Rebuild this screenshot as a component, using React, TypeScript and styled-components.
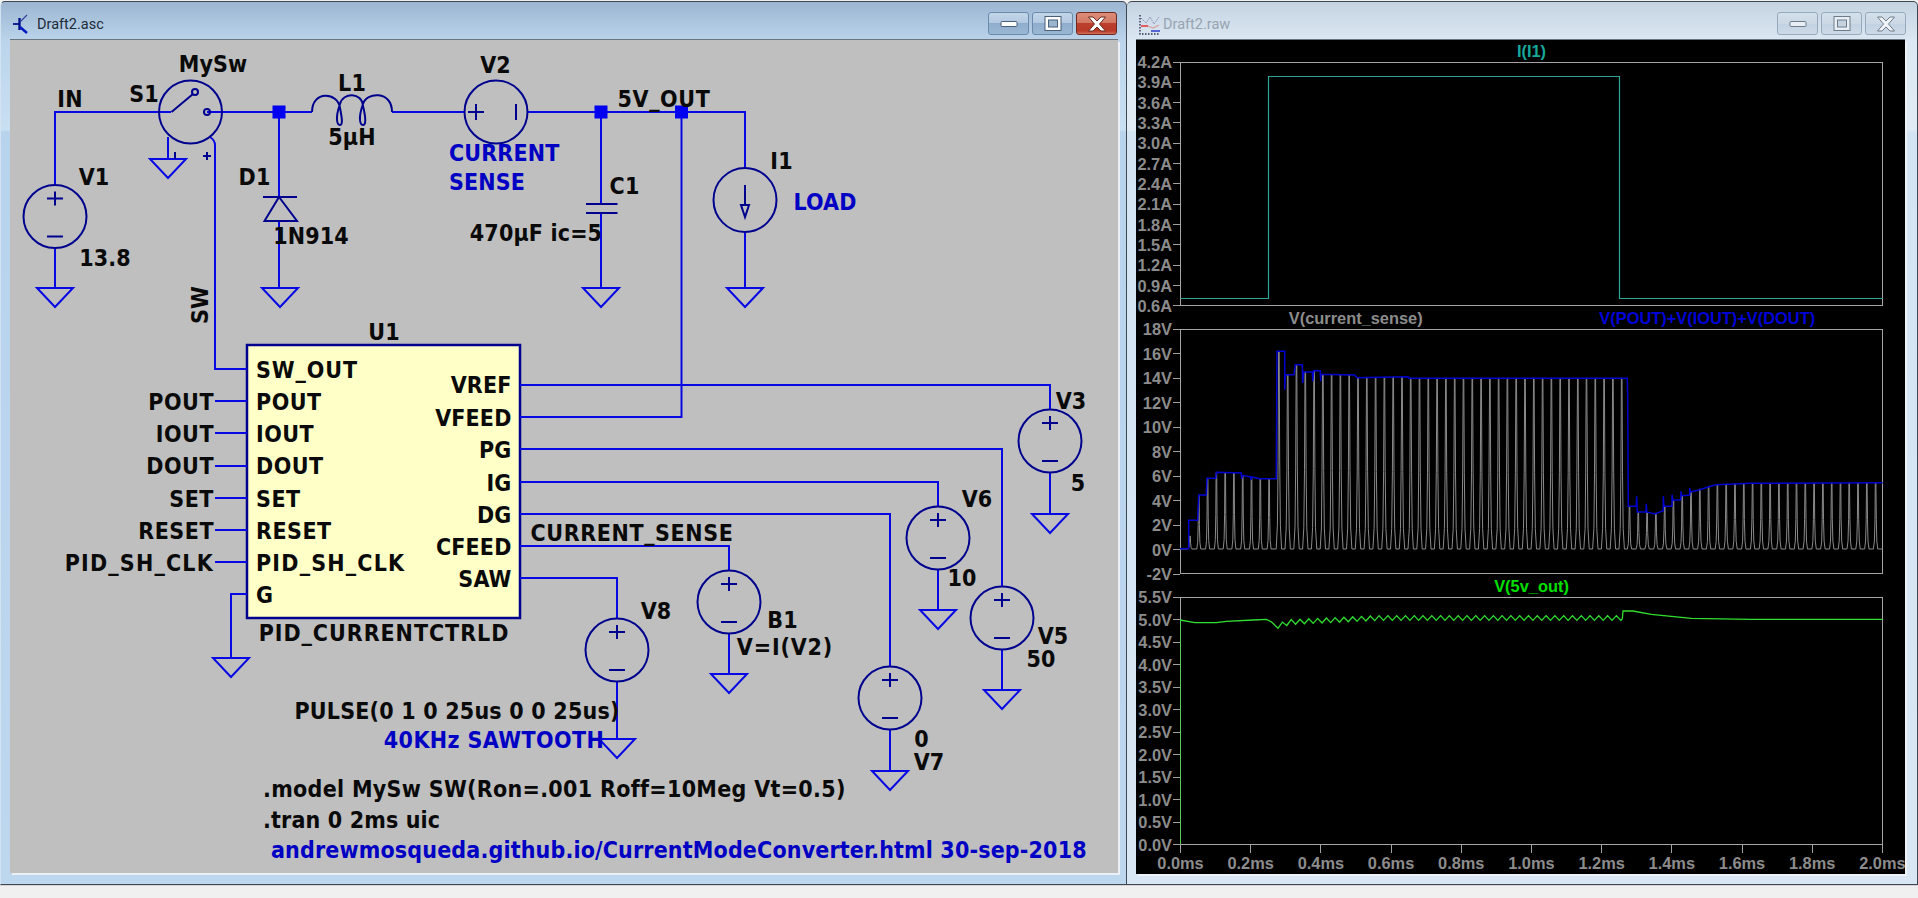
import React from "react";
import styled, { createGlobalStyle } from "styled-components";

const Global = createGlobalStyle`
  html, body { margin: 0; padding: 0; background: #eff0ef; overflow: hidden; }
  #root { width: 1918px; height: 898px; }
`;

const Screen = styled.div`
  width: 1918px;
  height: 898px;
  display: flex;
  flex-direction: column;
  background: #eff0ef;
  padding-top: 1px;
  box-sizing: border-box;
`;
const Desktop = styled.div`
  display: flex;
  height: 884px;
`;
const Strip = styled.div`
  flex: 1;
  background: #eff0ef;
  border-top: 1px solid #d8d2d8;
`;
const Window = styled.section<{ $active?: boolean; $w: number }>`
  width: ${(p) => p.$w}px;
  box-sizing: border-box;
  display: flex;
  flex-direction: column;
  border: 1px solid #3d4852;
  border-left: ${(p) => (p.$active ? "1px solid #d4e3f1" : "0")};
  border-radius: 5px 5px 0 0;
  background: ${(p) =>
    p.$active
      ? "linear-gradient(180deg, #9cb6d2 0, #bcd5ec 40px, #c9dff2 128px, #b8d3ec 130px, #bcd7ee 100%)"
      : "linear-gradient(180deg, #c5d3e1 0, #dce8f3 40px, #e0ebf5 128px, #d4e4f3 130px, #d9e7f4 100%)"};
`;
const TitleBar = styled.header<{ $right: number }>`
  height: 38px;
  box-sizing: border-box;
  display: flex;
  align-items: flex-start;
  padding: 10px ${(p) => p.$right}px 0 12px;
`;
const TitleIcon = styled.svg`
  width: 22px;
  height: 22px;
  margin: 2px 2px 0 0;
  flex: none;
`;
const TitleText = styled.span<{ $active?: boolean }>`
  font: 400 14.5px/26px Roboto, "Noto Sans", sans-serif;
  color: ${(p) => (p.$active ? "#1d2b38" : "#97a4b1")};
`;
const Buttons = styled.div`
  margin-left: auto;
  display: flex;
  gap: 3px;
`;
const CaptionButton = styled.div<{ $kind: "plain" | "close"; $active?: boolean }>`
  width: 41px;
  height: 23px;
  box-sizing: border-box;
  border-radius: 3px;
  display: flex;
  align-items: center;
  justify-content: center;
  border: 1px solid
    ${(p) => (p.$kind === "close" && p.$active ? "#6e2a20" : p.$active ? "#6b8bad" : "#97aabd")};
  background: ${(p) =>
    p.$kind === "close" && p.$active
      ? "linear-gradient(180deg, #dd8c78 0, #d27a66 45%, #bb3f2c 50%, #b83a28 85%, #d0705a 100%)"
      : p.$active
      ? "linear-gradient(180deg, #c2d5e8 0, #b4cae1 45%, #8fadcd 50%, #9ab7d4 100%)"
      : "linear-gradient(180deg, #d4e0eb 0, #cbd8e5 50%, #c2d2e2 52%, #cddaE7 100%)"};
`;
const Body = styled.div<{ $left: number; $right: number; $bottom: number }>`
  flex: 1;
  display: flex;
  padding: 0 ${(p) => p.$right}px ${(p) => p.$bottom}px ${(p) => p.$left}px;
  min-height: 0;
`;
const SchematicClient = styled.div`
  position: relative;
  width: 1108px;
  height: 833px;
  background: #bfbfbf;
  box-shadow: 0 -1px 0 #6b7580, 2px 2px 0 #eaf0f6;
  overflow: hidden;
`;
const WaveClient = styled.div`
  width: 769px;
  height: 834px;
  background: #000;
  box-shadow: 0 -1px 0 #6b7580, 2px 2px 0 #eef3f8;
  display: flex;
  flex-direction: column;
  overflow: hidden;
`;
const CircuitSvg = styled.svg`
  position: absolute;
  left: 0;
  top: 0;
`;
const Wire = styled.path`
  fill: none;
  stroke: #0808e4;
  stroke-width: 2;
`;
const Sym = styled.path`
  fill: none;
  stroke: #00008f;
  stroke-width: 2;
`;
const Junction = styled.rect`
  fill: #0000f0;
`;
const BlockFill = styled.rect`
  fill: #ffffc8;
  stroke: #00008f;
  stroke-width: 2.5;
`;
const Label = styled.span<{
  $x: number;
  $y: number;
  $a?: "l" | "c" | "r";
  $blue?: boolean;
  $rot?: boolean;
  $ls?: number;
}>`
  position: absolute;
  left: ${(p) => p.$x - 10}px;
  top: ${(p) => p.$y - 40}px;
  transform: translate(${(p) => (p.$a === "c" ? "-50%" : p.$a === "r" ? "-100%" : "0")}, -50%)
    ${(p) => (p.$rot ? "rotate(-90deg)" : "")};
  font: 700 23px/26px "DejaVu Sans Condensed", "DejaVu Sans", sans-serif;
  letter-spacing: ${(p) => p.$ls ?? 0.15}px;
  white-space: nowrap;
  color: ${(p) => (p.$blue ? "#0000c4" : "#0a0a0a")};
`;

const Pane = styled.div<{ $title: number; $plot: number }>`
  display: grid;
  grid-template-columns: 44px 703px;
  grid-template-rows: ${(p) => p.$title}px ${(p) => p.$plot}px;
`;
const PaneTitles = styled.div`
  grid-column: 2;
  display: grid;
  grid-auto-flow: column;
  grid-auto-columns: 1fr;
  align-items: center;
  text-align: center;
`;
const PaneTitle = styled.span<{ $c: string }>`
  font: 700 16.4px/20px "Liberation Sans", Arial, sans-serif;
  color: ${(p) => p.$c};
`;
const YAxis = styled.div`
  grid-column: 1;
  display: flex;
  flex-direction: column;
  justify-content: space-between;
`;
const YTick = styled.div`
  height: 0;
  display: flex;
  align-items: center;
  justify-content: flex-end;
  font: 700 16.4px/20px "Liberation Sans", Arial, sans-serif;
  color: #8c8c8c;
  white-space: nowrap;
  &::after {
    content: "";
    width: 7px;
    height: 1px;
    margin-left: 1px;
    background: #a0a0a0;
  }
`;
const PlotArea = styled.div`
  box-shadow: inset 0 0 0 1px #a4a4a4;
`;
const Trace = styled.svg`
  display: block;
`;
const TraceLine = styled.path<{ $c: string; $w?: number }>`
  fill: none;
  stroke: ${(p) => p.$c};
  stroke-width: ${(p) => p.$w ?? 1};
`;
const XAxis = styled.div`
  margin-left: 44px;
  width: 703px;
  height: 29px;
  display: flex;
  justify-content: space-between;
`;
const XTick = styled.div`
  width: 1px;
  display: flex;
  flex-direction: column;
  align-items: center;
  font: 700 16.4px/20px "Liberation Sans", Arial, sans-serif;
  color: #8c8c8c;
  white-space: nowrap;
  &::before {
    content: "";
    flex: none;
    width: 1px;
    height: 8px;
    background: #a0a0a0;
  }
`;

/* ---------- schematic symbols ---------- */
const Ground = ({ x, y }: { x: number; y: number }) => (
  <Wire d={`M${x - 18} ${y}H${x + 18}L${x} ${y + 19}Z`} />
);
const Source = ({ x, y }: { x: number; y: number }) => (
  <>
    <Sym as="ellipse" cx={x} cy={y} rx={31.5} ry={31.5} />
    <Sym d={`M${x - 8} ${y - 18}H${x + 8}M${x} ${y - 25}V${y - 11}M${x - 8} ${y + 20}H${x + 8}`} />
  </>
);

const Schematic = () => (
  <CircuitSvg width={1108} height={833} viewBox="10 40 1108 833">
    <BlockFill x={247} y={345} width={273} height={273} />
    {/* wires */}
    <Wire d="M55 185V112H171M207 112H312M392 112H464M528 112H745V168M745 232V288M55 248V288" />
    <Wire d="M279 112V197M279 221V288M601 112V204M601 213V288" />
    <Wire d="M681.5 112V417H520M520 385H1050V409M1050 473V514" />
    <Wire d="M520 449H1002V587M1002 649V690M520 482H938V507M938 570V610" />
    <Wire d="M520 514H890V667M890 729V771M520 546H729V571M729 633V674M520 578H617V618M617 681V739" />
    <Wire d="M210 137C213 139 215 141 215 145V369H247" />
    <Wire d="M215 401H247M215 433H247M215 466H247M215 498H247M215 530H247M215 562H247M247 594H231V658" />
    <Wire d="M168 137V159" />
    {[
      [279, 112],
      [601, 112],
      [681.5, 112],
    ].map(([x, y]) => (
      <Junction key={x} x={x - 6.5} y={y - 6.5} width={13} height={13} />
    ))}
    {/* grounds */}
    {[
      [55, 288],
      [168, 159],
      [280, 288],
      [601, 288],
      [745, 288],
      [231, 658],
      [1050, 514],
      [1002, 690],
      [938, 610],
      [890, 771],
      [729, 674],
      [617, 739],
    ].map(([x, y]) => (
      <Ground key={`${x}-${y}`} x={x} y={y} />
    ))}
    {/* sources */}
    <Source x={55} y={216.5} />
    <Source x={1050} y={441} />
    <Source x={1002} y={618} />
    <Source x={938} y={538} />
    <Source x={890} y={698} />
    <Source x={729} y={602} />
    <Source x={617} y={650} />
    {/* V2 */}
    <Sym as="ellipse" cx={496} cy={112} rx={31.5} ry={31.5} />
    <Sym d="M468 112H484M476 104V120M516 104V120" />
    {/* S1 */}
    <Sym as="ellipse" cx={190.5} cy={112} rx={31.5} ry={31.5} />
    <Sym d="M171.5 112L193 94" />
    <Sym as="circle" cx={195} cy={92} r={3} />
    <Sym as="circle" cx={207} cy={112} r={3} />
    <Sym d="M175 152V159M203 156H211M207 152V160" />
    {/* L1 */}
    <Sym d="M312 112C312 90 338 92 340 108C342 118 343 125 340 125C337 125 335 118 340 104C343 92 362 92 363 106C366 118 366 125 363 125C360 125 358 118 363 104C366 92 392 90 392 112" />
    {/* D1 */}
    <Sym d="M263 197H297M279 197L264.5 221H297Z" />
    {/* C1 */}
    <Sym d="M586 204H617.5M586 213H617.5" />
    {/* I1 */}
    <Sym as="ellipse" cx={745} cy={200} rx={31.5} ry={32} />
    <Sym d="M745 185V205M741 205H749L745 217Z" />
  </CircuitSvg>
);

const leftPins: [string, number][] = [
  ["POUT", 402],
  ["IOUT", 433.5],
  ["DOUT", 466],
  ["SET", 498.5],
  ["RESET", 530.5],
  ["PID_SH_CLK", 562.5],
];
const rightPins: [string, number][] = [
  ["VREF", 385],
  ["VFEED", 417.5],
  ["PG", 449.5],
  ["IG", 483],
  ["DG", 515],
  ["CFEED", 547],
  ["SAW", 578.5],
];
const freeLabels: { t: string; x: number; y: number; a?: "l" | "c" | "r"; blue?: boolean; ls?: number }[] = [
  { t: "MySw", x: 213, y: 64, a: "c" },
  { t: "IN", x: 70, y: 99, a: "c" },
  { t: "S1", x: 144, y: 94, a: "c" },
  { t: "L1", x: 352, y: 83, a: "c" },
  { t: "V2", x: 495.5, y: 65, a: "c" },
  { t: "5V_OUT", x: 664, y: 99, a: "c", ls: 0.6 },
  { t: "5µH", x: 352, y: 137, a: "c" },
  { t: "V1", x: 94, y: 177, a: "c" },
  { t: "D1", x: 254.5, y: 177, a: "c" },
  { t: "CURRENT", x: 449, y: 153, blue: true },
  { t: "SENSE", x: 449, y: 182, blue: true },
  { t: "C1", x: 624.5, y: 186, a: "c" },
  { t: "470µF ic=5", x: 536, y: 233, a: "c" },
  { t: "1N914", x: 311, y: 236, a: "c" },
  { t: "13.8", x: 105, y: 258, a: "c" },
  { t: "I1", x: 781.5, y: 161, a: "c" },
  { t: "LOAD", x: 825, y: 202, a: "c", blue: true },
  { t: "U1", x: 384, y: 332, a: "c" },
  { t: "SW_OUT", x: 256, y: 370, ls: 0.9 },
  { t: "G", x: 256, y: 595 },
  { t: "PID_CURRENTCTRLD", x: 384, y: 633, a: "c", ls: 0.95 },
  { t: "V3", x: 1071, y: 401, a: "c" },
  { t: "5", x: 1078, y: 483, a: "c" },
  { t: "V6", x: 977, y: 499, a: "c" },
  { t: "10", x: 962, y: 578, a: "c" },
  { t: "V5", x: 1053, y: 636, a: "c" },
  { t: "50", x: 1041, y: 659, a: "c" },
  { t: "0", x: 921.5, y: 739, a: "c" },
  { t: "V7", x: 929, y: 762, a: "c" },
  { t: "B1", x: 782.5, y: 620, a: "c" },
  { t: "V=I(V2)", x: 785, y: 647, a: "c", ls: 0.85 },
  { t: "CURRENT_SENSE", x: 632, y: 533, a: "c", ls: 0.6 },
  { t: "V8", x: 656, y: 611, a: "c" },
  { t: "PULSE(0 1 0 25us 0 0 25us)", x: 457, y: 711, a: "c", ls: 0.2 },
  { t: "40KHz SAWTOOTH", x: 494, y: 740, a: "c", blue: true, ls: 0.4 },
  { t: ".model MySw SW(Ron=.001 Roff=10Meg Vt=0.5)", x: 263, y: 789, ls: 0.3 },
  { t: ".tran 0 2ms uic", x: 263, y: 820 },
  { t: "andrewmosqueda.github.io/CurrentModeConverter.html 30-sep-2018", x: 271, y: 850, blue: true },
];

/* ---------- waveform data ---------- */
const z7 = (px: number, py: number): [number, number] => [(px - 181) / 3, (py - 58) / 3];
const z8 = (px: number, py: number): [number, number] => [338 + px / 3, (py - 58) / 3];
const envelope: [number, number][] = [
  ...([
    [181, 717], [207, 717], [207, 632], [234, 632], [237, 556], [260, 556], [262, 506], [288, 506],
    [290, 488], [365, 490], [366, 508], [368, 497], [393, 502], [394, 510], [396, 502], [420, 507],
    [470, 507], [472, 125], [495, 125], [495, 240], [497, 195], [523, 195], [527, 165], [548, 165],
    [549, 220], [552, 187], [578, 187], [579, 215], [582, 183], [602, 183], [603, 215], [604, 194],
    [705, 196], [712, 204], [865, 201], [868, 206], [1200, 206],
  ] as [number, number][]).map(([a, b]) => z7(a, b)),
  ...([
    [328, 206], [329, 268], [331, 590], [355, 590], [356, 560], [358, 607], [384, 607], [385, 582],
    [386, 607], [410, 613], [436, 603], [436, 560], [438, 590], [462, 590], [462, 555], [465, 572],
    [488, 570], [489, 545], [491, 558], [515, 556], [515, 535], [517, 547], [545, 540], [570, 532],
    [595, 525], [700, 521], [1094, 519],
  ] as [number, number][]).map(([a, b]) => z8(a, b)),
];
const envAt = (x: number) => {
  for (let i = 0; i < envelope.length - 1; i++) {
    const [x0, y0] = envelope[i];
    const [x1, y1] = envelope[i + 1];
    if (x >= x0 && x <= x1) return x1 === x0 ? y1 : y0 + ((y1 - y0) * (x - x0)) / (x1 - x0);
  }
  return 174;
};
const toPath = (pts: [number, number][]) =>
  pts.map(([x, y], i) => `${i ? "L" : "M"}${x.toFixed(1)} ${y.toFixed(1)}`).join("");

const BASE = 220;
const buildGray = () => {
  const pts: [number, number][] = [[0, BASE]];
  for (let k = 0; k < 79; k++) {
    const off = k >= 10 && k < 50 ? 1 : 0;
    const p = 10 + 8.79 * k + off;
    if (p > 701) break;
    const high = k >= 10 && k < 50;
    const hb = high ? 2.7 : k >= 50 ? 2.2 : 2;
    let h = BASE - Math.min(envAt(p + 1.5), BASE);
    if (k === 0) h = 13;
    if (k === 10) h = 198;
    pts.push(
      [p - hb, BASE],
      [p - hb * 0.55, BASE - h * 0.12],
      [p - hb * 0.3, BASE - h * 0.45],
      [p - 0.3, BASE - h],
      [p + 0.3, BASE - h],
      [p + hb * 0.3, BASE - h * 0.45],
      [p + hb * 0.55, BASE - h * 0.12],
      [p + hb, BASE]
    );
  }
  pts.push([703, BASE]);
  return toPath(pts);
};
const buildGreen = () => {
  const z9 = (px: number, py: number): [number, number] => [(px - 181) / 3, py / 3 + 3];
  const z10 = (px: number, py: number): [number, number] => [338 + px / 3, py / 3 + 3];
  const pts: [number, number][] = [
    [0, 247],
    z9(181, 60), z9(225, 68), z9(290, 68), z9(320, 64), z9(400, 60), z9(440, 58), z9(455, 65), z9(475, 85),
  ];
  const startX = (475 - 181) / 3;
  const endX = 338 + 313 / 3;
  let up = true;
  for (let x = startX + 4.4; x < endX; x += 4.395) {
    const mean = x < 110 ? 29 - ((x - 98) / 12) * 4 : 25 - Math.min((x - 110) / 90, 1) * 4;
    pts.push([x, mean + (up ? -2.4 : 2.4) - 0]);
    up = !up;
  }
  pts.push(z10(313, 57), z10(315, 33), z10(345, 33), z10(400, 43), z10(520, 55), z10(700, 58), z10(1094, 58));
  return toPath(pts);
};

const GRAY = buildGray();
const BLUE = toPath(envelope);
const GREEN = buildGreen();

const ticks1 = ["4.2A", "3.9A", "3.6A", "3.3A", "3.0A", "2.7A", "2.4A", "2.1A", "1.8A", "1.5A", "1.2A", "0.9A", "0.6A"];
const ticks2 = ["18V", "16V", "14V", "12V", "10V", "8V", "6V", "4V", "2V", "0V", "-2V"];
const ticks3 = ["5.5V", "5.0V", "4.5V", "4.0V", "3.5V", "3.0V", "2.5V", "2.0V", "1.5V", "1.0V", "0.5V", "0.0V"];
const xTicks = ["0.0ms", "0.2ms", "0.4ms", "0.6ms", "0.8ms", "1.0ms", "1.2ms", "1.4ms", "1.6ms", "1.8ms", "2.0ms"];

const YLabels = ({ items }: { items: string[] }) => (
  <YAxis>
    {items.map((t) => (
      <YTick key={t}>{t}</YTick>
    ))}
  </YAxis>
);

const MinGlyph = ({ light }: { light?: boolean }) => (
  <svg width="18" height="8" viewBox="0 0 18 8">
    <rect x="1" y="1.5" width="16" height="5" rx="1" fill={light ? "#e8eef4" : "#fff"} stroke={light ? "#6e7c8a" : "#4a5f78"} />
  </svg>
);
const MaxGlyph = ({ light }: { light?: boolean }) => (
  <svg width="18" height="15" viewBox="0 0 18 15">
    <rect x="1" y="0.5" width="16" height="14" fill={light ? "#e8eef4" : "#fff"} stroke={light ? "#6e7c8a" : "#4a5f78"} />
    <rect x="4.5" y="4" width="9" height="7" fill={light ? "#c4d2e0" : "#9cb5cf"} stroke={light ? "#6e7c8a" : "#4a5f78"} />
  </svg>
);
const CloseGlyph = ({ light }: { light?: boolean }) => (
  <svg width="20" height="16" viewBox="0 0 20 16">
    <path
      d="M1.5 1H6L10 5L14 1H18.5L12.5 8L18.5 15H14L10 11L6 15H1.5L7.5 8Z"
      fill={light ? "#eef2f6" : "#fff"}
      stroke={light ? "#6e7c8a" : "#6a2a20"}
      strokeWidth="1"
    />
  </svg>
);

export default function App() {
  return (
    <Screen>
      <Global />
      <Desktop>
        <Window $active $w={1127}>
          <TitleBar $right={9}>
            <TitleIcon viewBox="0 0 22 22">
              <path d="M0 10H6" stroke="#00108a" strokeWidth="1.8" fill="none" />
              <path d="M6.5 4V16" stroke="#00108a" strokeWidth="2.4" fill="none" />
              <path d="M7 8L14 1" stroke="#2a3f9a" strokeWidth="1.1" fill="none" />
              <path d="M7 13L14 19" stroke="#0018c0" strokeWidth="2.4" fill="none" />
            </TitleIcon>
            <TitleText $active>Draft2.asc</TitleText>
            <Buttons>
              <CaptionButton $kind="plain" $active><MinGlyph /></CaptionButton>
              <CaptionButton $kind="plain" $active><MaxGlyph /></CaptionButton>
              <CaptionButton $kind="close" $active><CloseGlyph /></CaptionButton>
            </Buttons>
          </TitleBar>
          <Body $left={9} $right={8} $bottom={10}>
            <SchematicClient>
              <Schematic />
              {freeLabels.map((l) => (
                <Label key={l.t} $x={l.x} $y={l.y} $a={l.a ?? "l"} $blue={l.blue} $ls={l.ls}>
                  {l.t}
                </Label>
              ))}
              <Label $x={200} $y={305} $a="c" $rot>SW</Label>
              {leftPins.map(([t, y]) => (
                <React.Fragment key={t}>
                  <Label $x={214} $y={y} $a="r" $ls={t === "PID_SH_CLK" ? 1.2 : 0.5}>{t}</Label>
                  <Label $x={256} $y={y} $ls={t === "PID_SH_CLK" ? 1.2 : 0.5}>{t}</Label>
                </React.Fragment>
              ))}
              {rightPins.map(([t, y]) => (
                <Label key={t} $x={511.5} $y={y} $a="r">{t}</Label>
              ))}
            </SchematicClient>
          </Body>
        </Window>
        <Window $w={791}>
          <TitleBar $right={11}>
            <TitleIcon viewBox="0 0 22 22">
              <path d="M1 1V20H21" stroke="#30304a" strokeWidth="1.4" strokeDasharray="1.5 1.5" fill="none" />
              <path d="M2 4L7 9L11 3L15 10L20 3" stroke="#8a8ab0" strokeWidth="1" strokeDasharray="1.5 1" fill="none" />
              <path d="M2 12H9" stroke="#e83030" strokeWidth="1.5" />
              <path d="M9 12L14 14L20 11" stroke="#d8a0a0" strokeWidth="1.2" fill="none" />
              <path d="M12 17H21" stroke="#2030c8" strokeWidth="1.4" />
            </TitleIcon>
            <TitleText>Draft2.raw</TitleText>
            <Buttons>
              <CaptionButton $kind="plain"><MinGlyph light /></CaptionButton>
              <CaptionButton $kind="plain"><MaxGlyph light /></CaptionButton>
              <CaptionButton $kind="close"><CloseGlyph light /></CaptionButton>
            </Buttons>
          </TitleBar>
          <Body $left={9} $right={11} $bottom={9}>
            <WaveClient>
              <Pane $title={22} $plot={244}>
                <PaneTitles>
                  <PaneTitle $c="#17a89c">I(I1)</PaneTitle>
                </PaneTitles>
                <YLabels items={ticks1} />
                <PlotArea>
                  <Trace width={703} height={244}>
                    <TraceLine $c="#2fa596" $w={1.2} d="M0.5 236.5H88.5V14.5H439.5V236.5H703" />
                  </Trace>
                </PlotArea>
              </Pane>
              <Pane $title={23} $plot={245}>
                <PaneTitles>
                  <PaneTitle $c="#8c8c8c">V(current_sense)</PaneTitle>
                  <PaneTitle $c="#0000d8">V(POUT)+V(IOUT)+V(DOUT)</PaneTitle>
                </PaneTitles>
                <YLabels items={ticks2} />
                <PlotArea>
                  <Trace width={703} height={245}>
                    <TraceLine $c="#8a8a8a" d={GRAY} />
                    <TraceLine $c="#0000d0" $w={1.5} d={BLUE} />
                  </Trace>
                </PlotArea>
              </Pane>
              <Pane $title={23} $plot={248}>
                <PaneTitles>
                  <PaneTitle $c="#00e000">V(5v_out)</PaneTitle>
                </PaneTitles>
                <YLabels items={ticks3} />
                <PlotArea>
                  <Trace width={703} height={248}>
                    <TraceLine $c="#30e030" $w={1.3} d={GREEN} />
                  </Trace>
                </PlotArea>
              </Pane>
              <XAxis>
                {xTicks.map((t) => (
                  <XTick key={t}>{t}</XTick>
                ))}
              </XAxis>
            </WaveClient>
          </Body>
        </Window>
      </Desktop>
      <Strip />
    </Screen>
  );
}
